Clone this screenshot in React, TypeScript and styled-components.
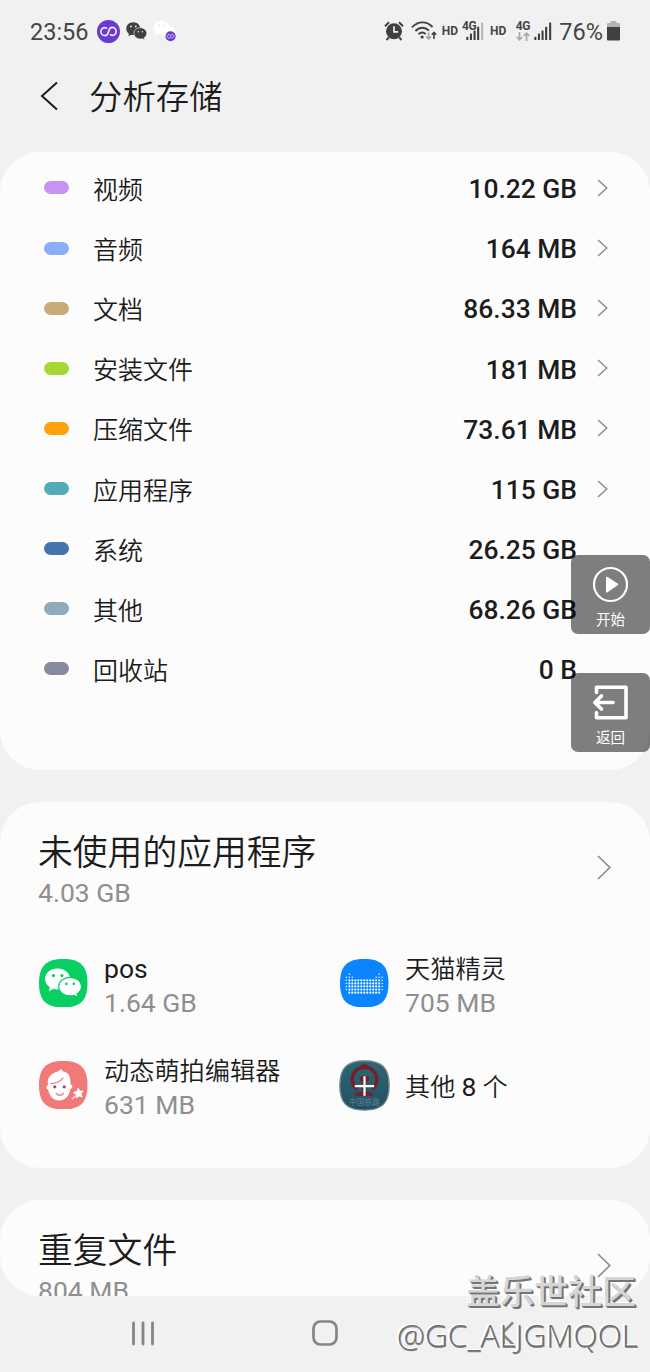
import React from 'react';
import styled, { createGlobalStyle } from 'styled-components';

const GlobalStyle = createGlobalStyle`
  *, *::before, *::after { box-sizing: border-box; }
  body {
    margin: 0;
    background: #f1f1f1;
    color: #1c1c1c;
    font-family: Roboto, 'Noto Sans CJK SC', sans-serif;
  }
  h1, h2, p { margin: 0; font-weight: 400; }
  svg { display: block; flex: none; }
`;

const Screen = styled.main`
  position: relative;
  width: 650px;
  height: 1372px;
  overflow: hidden;
  display: flex;
  flex-direction: column;
`;

const StatusBar = styled.header`
  display: flex;
  align-items: center;
  height: 62px;
  flex: none;
  padding: 0 30px;
  color: #454545;
  justify-content: space-between;
`;

const StatusGroup = styled.div`
  display: flex;
  align-items: center;
`;

const StatusText = styled.span<{ $size: number }>`
  font-size: ${(p) => p.$size}px;
  line-height: 30px;
  padding-top: 1px;
  white-space: nowrap;
`;

const Slot = styled.span<{ $gap: number }>`
  display: flex;
  margin-left: ${(p) => p.$gap}px;
`;

const Badge = styled.span`
  font-size: 12px;
  line-height: 12px;
  font-weight: 700;
`;

const TitleBar = styled.div`
  display: flex;
  align-items: center;
  height: 90px;
  flex: none;
  padding: 0 0 22px 40px;
`;

const Title = styled.h1`
  margin: 4px 0 0 30px;
  font-size: 33.4px;
  line-height: 48px;
  font-weight: 350;
`;

const Card = styled.section<{ $height: number }>`
  height: ${(p) => p.$height}px;
  flex: none;
  border-radius: 40px;
  background: #fcfcfc;
  overflow: hidden;
`;

const StorageCard = styled(Card)`
  padding-top: 5.8px;
  margin-bottom: 32px;
`;

const AppsCard = styled(Card)`
  padding: 27px 39px 0 38px;
  margin-bottom: 32px;
`;

const DuplicateCard = styled(Card)`
  padding: 27px 39px 0 38px;
`;

const Row = styled.div`
  display: flex;
  align-items: center;
  height: 60.15px;
  padding: 0 42px 0 44px;
`;

const Pill = styled.span<{ $color: string }>`
  width: 25px;
  height: 13px;
  border-radius: 6.5px;
  background: ${(p) => p.$color};
`;

const RowLabel = styled.span`
  margin: 6px 0 0 24px;
  flex: 1;
  font-size: 25px;
  line-height: 36px;
  font-weight: 350;
`;

const RowValue = styled.span`
  margin-top: 2.5px;
  font-size: 26.4px;
  line-height: 36px;
  font-weight: 500;
`;

const RowArrow = styled.span`
  display: flex;
  width: 31px;
  padding-left: 20px;
`;

const SectionHead = styled.div`
  display: flex;
  align-items: center;
  justify-content: space-between;
`;

const SectionArrow = styled.span`
  display: flex;
  margin-bottom: 4px;
`;

const SectionTitle = styled.h2`
  font-size: 34.8px;
  line-height: 48px;
  font-weight: 350;
`;

const Muted = styled.p`
  font-size: 26.5px;
  line-height: 32px;
  color: #8f8f8f;
`;

const AppGrid = styled.div`
  display: grid;
  grid-template-columns: 301px 1fr;
  grid-auto-rows: 102px;
  margin-top: 38px;
`;

const AppItem = styled.div`
  display: flex;
  align-items: center;
  height: 76px;
`;

const AppIcon = styled.span`
  display: flex;
  justify-content: center;
  width: 51px;
  margin-bottom: 4px;
`;

const AppText = styled.div`
  margin-left: 15px;
`;

const AppName = styled.p`
  font-size: 25.2px;
  line-height: 35px;
  font-weight: 350;
`;

const Latin = styled.span`
  font-size: 26.5px;
  line-height: 30px;
  font-weight: 400;
`;

const NavBar = styled.nav`
  display: flex;
  align-items: center;
  height: 76px;
  flex: none;
  padding: 0 135px 2px 131px;
`;

const NavSlot = styled.span<{ $grow?: boolean }>`
  display: flex;
  justify-content: center;
  flex: ${(p) => (p.$grow ? '1' : 'none')};
  padding-right: ${(p) => (p.$grow ? '5px' : '0')};
`;

const FloatingButton = styled.button<{ $top: number }>`
  position: absolute;
  top: ${(p) => p.$top}px;
  right: 0;
  width: 79px;
  height: 79px;
  padding: 11px 0 0;
  border: 0;
  border-radius: 7px;
  background: rgba(0, 0, 0, 0.5);
  color: #fff;
  display: flex;
  flex-direction: column;
  align-items: center;
  font-family: 'Noto Sans CJK SC', sans-serif;
  font-size: 14.5px;
  line-height: 22px;
  gap: 5px;
`;

const Watermark = styled.div`
  position: absolute;
  right: 12px;
  bottom: 15px;
  text-align: right;
  white-space: nowrap;
`;

const WatermarkSite = styled.p`
  padding-right: 2px;
  font-family: 'Noto Sans CJK SC', sans-serif;
  font-size: 34px;
  line-height: 46px;
  font-weight: 500;
  color: #d6d6d6;
  text-shadow: 1px 1px 0 #757575, 2px 2px 0 #757575, -1px -1px 0 #fff;
`;

const WatermarkUser = styled.p`
  font-family: 'Open Sans', sans-serif;
  font-size: 31.6px;
  line-height: 44px;
  font-weight: 300;
  color: #6e6e6e;
  text-shadow: -1px -1px 0 #fff, -2px -1px 0 #fff, 0.5px 0.5px 0 #8a8a8a;
`;

const Chevron = ({ w, h, color = '#8a8a8a', stroke = 1.4 }: { w: number; h: number; color?: string; stroke?: number }) => (
  <svg width={w} height={h} fill="none" stroke={color} strokeWidth={stroke}>
    <path d={`M1 1 L${w - 1.2} ${h / 2} L1 ${h - 1}`} />
  </svg>
);

const Bubbles = ({ width, height, fill, eye }: { width: number; height: number; fill: string; eye: string }) => (
  <svg width={width} height={height} viewBox="0 0 37 29" preserveAspectRatio="none">
    <g fill={fill}>
      <path d="M12.8 0.5C5.8 .5 .5 5 .5 10.8c0 3.4 1.8 6.2 4.6 8L4.2 22.8l4.6-2.3c1.3.4 2.7.6 4 .6 7 0 12.4-4.6 12.4-10.3S19.8.5 12.8.5Z" />
      <path
        d="M25.3 9.2c-6.4 0-11.3 4-11.3 9.1s4.9 9.2 11.3 9.2c1.4 0 2.7-.2 3.9-.6l3.9 2-.9-3.5c2.7-1.7 4.4-4.2 4.4-7.1 0-5.1-4.9-9.1-11.3-9.1Z"
        stroke={eye}
        strokeWidth="1.1"
      />
    </g>
    <g fill={eye}>
      <circle cx="8.8" cy="7.4" r="1.6" />
      <circle cx="17.2" cy="7.4" r="1.6" />
      <circle cx="21.6" cy="15.6" r="1.3" />
      <circle cx="29" cy="15.6" r="1.3" />
    </g>
  </svg>
);

const LoopMark = () => (
  <>
    <circle cx="11" cy="11" r="11" fill="#6a3bd0" />
    <path
      d="M9.300 7.800C6.200 6.200 3.700 8.400 3.700 11 3.700 13.300 5.500 15 7.700 15 10.200 15 10.500 13.100 11.100 11 11.700 8.900 12.100 7 14.400 7 16.600 7 18.300 8.800 18.300 11 18.300 13.600 15.800 15.800 12.800 14.200"
      fill="none"
      stroke="#efe5ff"
      strokeWidth="1.600"
      strokeLinecap="round"
    />
  </>
);

const LoopIcon = () => (
  <svg width="23" height="23" viewBox="0 0 22 22">
    <LoopMark />
  </svg>
);

const FadedBubbles = () => (
  <svg width="24" height="22" viewBox="0 0 24 22">
    <ellipse cx="8.5" cy="7.5" rx="8" ry="6.7" fill="#fff" />
    <path d="M2.5 11l.3 5 5-3Z" fill="#fff" />
    <ellipse cx="16" cy="12.3" rx="6.5" ry="6" fill="#fff" />
    <circle cx="6" cy="5.5" r="1" fill="#e4e4e4" />
    <circle cx="11.5" cy="5.5" r="1" fill="#e4e4e4" />
    <g transform="translate(12.5 11.2) scale(.46)">
      <LoopMark />
    </g>
  </svg>
);

const AlarmIcon = () => (
  <svg width="20" height="20" viewBox="0 0 20 20">
    <circle cx="10" cy="10.3" r="8" fill="#404040" />
    <path d="M1 5.2 5 1.2M15 1.2l4 4M4.8 16.4 2.6 19M15.2 16.4l2.2 2.6" stroke="#404040" strokeWidth="2" fill="none" />
    <path d="M10 5.2v5.7h4.2" stroke="#f1f1f1" strokeWidth="1.7" fill="none" />
  </svg>
);

const WifiIcon = () => (
  <svg width="26" height="20" viewBox="0 0 26 20" fill="none">
    <g stroke="#404040" strokeWidth="1.9">
      <path d="M1 6.3C7.2-.2 15.8-.2 21.5 6" />
      <path d="M4.4 10c4.2-4.3 9.6-4.3 13.6-.3" />
      <path d="M7.6 13.2c2.3-2.2 5-2.2 7.2 0" />
    </g>
    <circle cx="11.1" cy="16" r="1.6" fill="#404040" />
    <path d="M17.6 11.5v6.3M15.2 15.4l2.4 2.5 2.4-2.5" stroke="#a5a5a5" strokeWidth="1.6" />
    <path d="M23 18v-6M20.8 13.8 23 11.4l2.2 2.4" stroke="#404040" strokeWidth="1.6" />
  </svg>
);

const SignalIcon = ({ weak }: { weak?: boolean }) => (
  <svg width="18" height="19" viewBox="0 0 18 19">
    {[
      [0, 3.2],
      [3.6, 6.5],
      [7.2, 9.6],
      [10.8, 13.2],
      [14.8, 17.5],
    ].map(([x, h], i) => (
      <rect key={x} x={x + 0.3} y={18 - h} width="2.1" height={h} rx=".6" fill={weak && i === 4 ? '#b5b5b5' : '#404040'} />
    ))}
  </svg>
);

const BatteryIcon = () => (
  <svg width="13" height="20" viewBox="0 0 13 20">
    <path d="M3.5 0h6v2H12a1 1 0 0 1 1 1v4H0V3a1 1 0 0 1 1-1h2.5Z" fill="#b3b3b3" />
    <path d="M0 6h13v12.5a1 1 0 0 1-1 1H1a1 1 0 0 1-1-1Z" fill="#404040" />
  </svg>
);

const WeakSignal = styled.span`
  position: relative;
  display: block;
  width: 22px;
  height: 20px;
  padding: 1px 0 0 4px;
`;

const SignalTag = styled(Badge)`
  position: absolute;
  left: 0;
  top: -1px;
  letter-spacing: -0.5px;
`;

const NetworkStack = styled.span`
  display: flex;
  flex-direction: column;
  align-items: center;
  height: 20px;
  width: 15px;
  line-height: 11px;
`;

const NetworkTag = styled(Badge)`
  line-height: 10px;
  letter-spacing: -0.3px;
  margin-bottom: 1px;
`;

const DataArrows = () => (
  <svg width="14" height="9" viewBox="0 0 14 9" fill="none" stroke="#a8a8a8" strokeWidth="1.7">
    <path d="M3.5 0v7.6M.7 5l2.8 2.8L6.3 5M10.5 9V1.4M7.7 4l2.8-2.8L13.3 4" />
  </svg>
);

const SQUIRCLE = 'M24 0C41 0 48 7 48 24S41 48 24 48 0 41 0 24 7 0 24 0Z';

const PosIcon = () => (
  <svg width="48.500" height="48.500" viewBox="0 0 48 48">
    <path d={SQUIRCLE} fill="#07cf62" />
    <svg x="5.5" y="9" width="37" height="29">
      <Bubbles width={37} height={29} fill="#fff" eye="#07cf62" />
    </svg>
  </svg>
);

const DOT_TOPS = [1, 0, 1, 2, 2, 2, 2, 2, 2, 2, 1, 0, 1];

const GenieIcon = () => (
  <svg width="48.500" height="48.500" viewBox="0 0 48 48">
    <path d={SQUIRCLE} fill="#0a84ff" />
    {DOT_TOPS.map((top, col) =>
      Array.from({ length: 7 - top }, (_, i) => {
        const row = top + i;
        if (row === 6 && (col === 0 || col === 12)) return null;
        const r = row < 2 || col === 0 || col === 12 ? 0.75 : 1.1;
        return <circle key={`${col}-${row}`} cx={6.3 + col * 2.95} cy={15 + row * 3.05} r={r} fill="#f2f9ff" />;
      }),
    )}
  </svg>
);

const FaceIcon = () => (
  <svg width="48.500" height="48.500" viewBox="0 0 48 48">
    <path d={SQUIRCLE} fill="#ef7a78" />
    <path
      d="M9.2 24C7 17 12.500 12 18.500 10.500L22.500 8l.6 2.200c4.700.5 8 3.800 7.800 8.800l.5 4.500c1.800-.5 2.700 3-.4 4.500-1.200 7-5.400 11-11 11-5.800 0-9.800-4.300-10.800-10.600-2.500-.6-2.500-4.400 0-4.400Z"
      fill="#fff"
    />
    <path d="M11.500 22.300c5.500-.2 9.500-1.800 12.300-5.300" stroke="#ef7a78" strokeWidth="1.200" fill="none" strokeLinecap="round" />
    <circle cx="15.600" cy="25.600" r="1.600" fill="#a8456c" />
    <circle cx="25" cy="25.600" r="1.600" fill="#a8456c" />
    <path d="M17 32c1.800 2.600 5.200 2.600 7 0" stroke="#ef7a78" strokeWidth="1.400" fill="none" strokeLinecap="round" />
    <path
      d="M38.900 26.800l1.500 3 3.300-.2-2 2.800 1.100 3.200-3.200-1-2.700 1.900v-3.400l-2.800-1.900 3.300-1.100Z"
      fill="#fff"
      stroke="#fff"
      strokeWidth=".8"
      strokeLinejoin="round"
    />
    <path d="M36.200 34.200l-3.600 3.800" stroke="#ffd3d0" strokeWidth="1.800" />
  </svg>
);

const MoreAppsIcon = () => (
  <svg width="51" height="51" viewBox="0 0 50 50">
    <defs>
      <linearGradient id="rail" x2="0" y2="1">
        <stop offset="0" stopColor="#2a6873" />
        <stop offset="1" stopColor="#244f63" />
      </linearGradient>
    </defs>
    <path d={SQUIRCLE} transform="translate(.8 .8) scale(1.008)" fill="url(#rail)" stroke="#7d8688" strokeWidth="1.300" />
    <path d="M17.500 28.500a12 12 0 1 1 15 0" fill="none" stroke="#7a1d28" strokeWidth="3.400" />
    <path d="M22 4.300h6v3h-6Z M20 17c2-2 8-2 10 0l-1.500 4h-2v10l6.500 1.500V35h-17v-2.500L22.500 31V21H21Z" fill="#7a1d28" />
    <text x="25" y="44.500" textAnchor="middle" fontSize="7.600" fill="#5c8391" fontFamily="'Noto Sans CJK SC', sans-serif">
      中国铁路
    </text>
    <path d="M25 16v19M15.500 25.500h19" stroke="#fff" strokeWidth="2.200" />
  </svg>
);

const PlayIcon = () => (
  <svg width="37" height="37" viewBox="0 0 37 37">
    <circle cx="18.500" cy="18.500" r="16.500" fill="none" stroke="#fff" strokeWidth="2.200" />
    <path d="M14.800 11.500 25.500 18.500 14.800 25.800Z" fill="#fff" stroke="#fff" strokeWidth="1.500" strokeLinejoin="round" />
  </svg>
);

const ExitIcon = () => (
  <svg width="37" height="37" viewBox="0 0 37 37" fill="none" stroke="#fff" strokeWidth="3.600" strokeLinecap="round" strokeLinejoin="round">
    <path d="M4.500 8.500V3.200H34v30.600H4.500v-5.300" />
    <path d="M21 18.500H3M9.500 12 2.800 18.500l6.700 6.500" />
  </svg>
);

const CATEGORIES = [
  { label: '视频', value: '10.22 GB', color: '#c792f1', link: true },
  { label: '音频', value: '164 MB', color: '#8aaff6', link: true },
  { label: '文档', value: '86.33 MB', color: '#c9ab78', link: true },
  { label: '安装文件', value: '181 MB', color: '#a6d834', link: true },
  { label: '压缩文件', value: '73.61 MB', color: '#ffa10b', link: true },
  { label: '应用程序', value: '115 GB', color: '#52acb5', link: true },
  { label: '系统', value: '26.25 GB', color: '#4475ad', link: false },
  { label: '其他', value: '68.26 GB', color: '#90aabb', link: false },
  { label: '回收站', value: '0 B', color: '#868a9b', link: false },
];

const APPS = [
  { id: 'pos', name: <Latin>pos</Latin>, size: '1.64 GB', Icon: PosIcon },
  { id: 'genie', name: '天猫精灵', size: '705 MB', Icon: GenieIcon },
  { id: 'face', name: '动态萌拍编辑器', size: '631 MB', Icon: FaceIcon },
  { id: 'more', name: <>其他 <Latin>8</Latin> 个</>, size: '', Icon: MoreAppsIcon },
];

export default function App() {
  return (
    <Screen>
      <GlobalStyle />
      <StatusBar>
        <StatusGroup>
          <StatusText $size={23.5}>23:56</StatusText>
          <Slot $gap={8}><LoopIcon /></Slot>
          <Slot $gap={6}><Bubbles width={21} height={18} fill="#404040" eye="#f1f1f1" /></Slot>
          <Slot $gap={6}><FadedBubbles /></Slot>
        </StatusGroup>
        <StatusGroup>
          <AlarmIcon />
          <Slot $gap={7}><WifiIcon /></Slot>
          <Slot $gap={5}><Badge>HD</Badge></Slot>
          <Slot $gap={4}>
            <WeakSignal>
              <SignalIcon weak />
              <SignalTag>4G</SignalTag>
            </WeakSignal>
          </Slot>
          <Slot $gap={6}><Badge>HD</Badge></Slot>
          <Slot $gap={9}>
            <NetworkStack>
              <NetworkTag>4G</NetworkTag>
              <DataArrows />
            </NetworkStack>
          </Slot>
          <Slot $gap={4}><SignalIcon /></Slot>
          <Slot $gap={7}><StatusText $size={23.5}>76%</StatusText></Slot>
          <Slot $gap={4}><BatteryIcon /></Slot>
        </StatusGroup>
      </StatusBar>

      <TitleBar>
        <svg width="19" height="30" fill="none" stroke="#1c1c1c" strokeWidth="2">
          <path d="M17 1.500 2 15 17 28.500" />
        </svg>
        <Title>分析存储</Title>
      </TitleBar>

      <StorageCard $height={618}>
        {CATEGORIES.map((c) => (
          <Row key={c.label}>
            <Pill $color={c.color} />
            <RowLabel>{c.label}</RowLabel>
            <RowValue>{c.value}</RowValue>
            <RowArrow>{c.link && <Chevron w={11} h={18} />}</RowArrow>
          </Row>
        ))}
      </StorageCard>

      <AppsCard $height={366}>
        <SectionHead>
          <div>
            <SectionTitle>未使用的应用程序</SectionTitle>
            <Muted>4.03 GB</Muted>
          </div>
          <SectionArrow><Chevron w={14} h={25} stroke={1.6} /></SectionArrow>
        </SectionHead>
        <AppGrid>
          {APPS.map(({ id, name, size, Icon }) => (
            <AppItem key={id}>
              <AppIcon><Icon /></AppIcon>
              <AppText>
                <AppName>{name}</AppName>
                {size && <Muted>{size}</Muted>}
              </AppText>
            </AppItem>
          ))}
        </AppGrid>
      </AppsCard>

      <DuplicateCard $height={96}>
        <SectionHead>
          <div>
            <SectionTitle>重复文件</SectionTitle>
            <Muted>804 MB</Muted>
          </div>
          <SectionArrow><Chevron w={14} h={25} stroke={1.6} /></SectionArrow>
        </SectionHead>
      </DuplicateCard>

      <NavBar>
        <NavSlot>
          <svg width="24" height="25" stroke="#858585" strokeWidth="2.800" strokeLinecap="round">
            <path d="M2.500 2v21M12 2v21M21.500 2v21" />
          </svg>
        </NavSlot>
        <NavSlot $grow>
          <svg width="26" height="26" fill="none" stroke="#858585" strokeWidth="2.700">
            <rect x="1.500" y="1.500" width="23" height="23" rx="7" />
          </svg>
        </NavSlot>
        <NavSlot>
          <svg width="15" height="25" fill="none" stroke="#858585" strokeWidth="2.600">
            <path d="M13 1.500 2 12.500 13 23.500" />
          </svg>
        </NavSlot>
      </NavBar>

      <FloatingButton $top={555}>
        <PlayIcon />
        开始
      </FloatingButton>
      <FloatingButton $top={673}>
        <ExitIcon />
        返回
      </FloatingButton>

      <Watermark>
        <WatermarkSite>盖乐世社区</WatermarkSite>
        <WatermarkUser>@GC_ALJGMQOL</WatermarkUser>
      </Watermark>
    </Screen>
  );
}
